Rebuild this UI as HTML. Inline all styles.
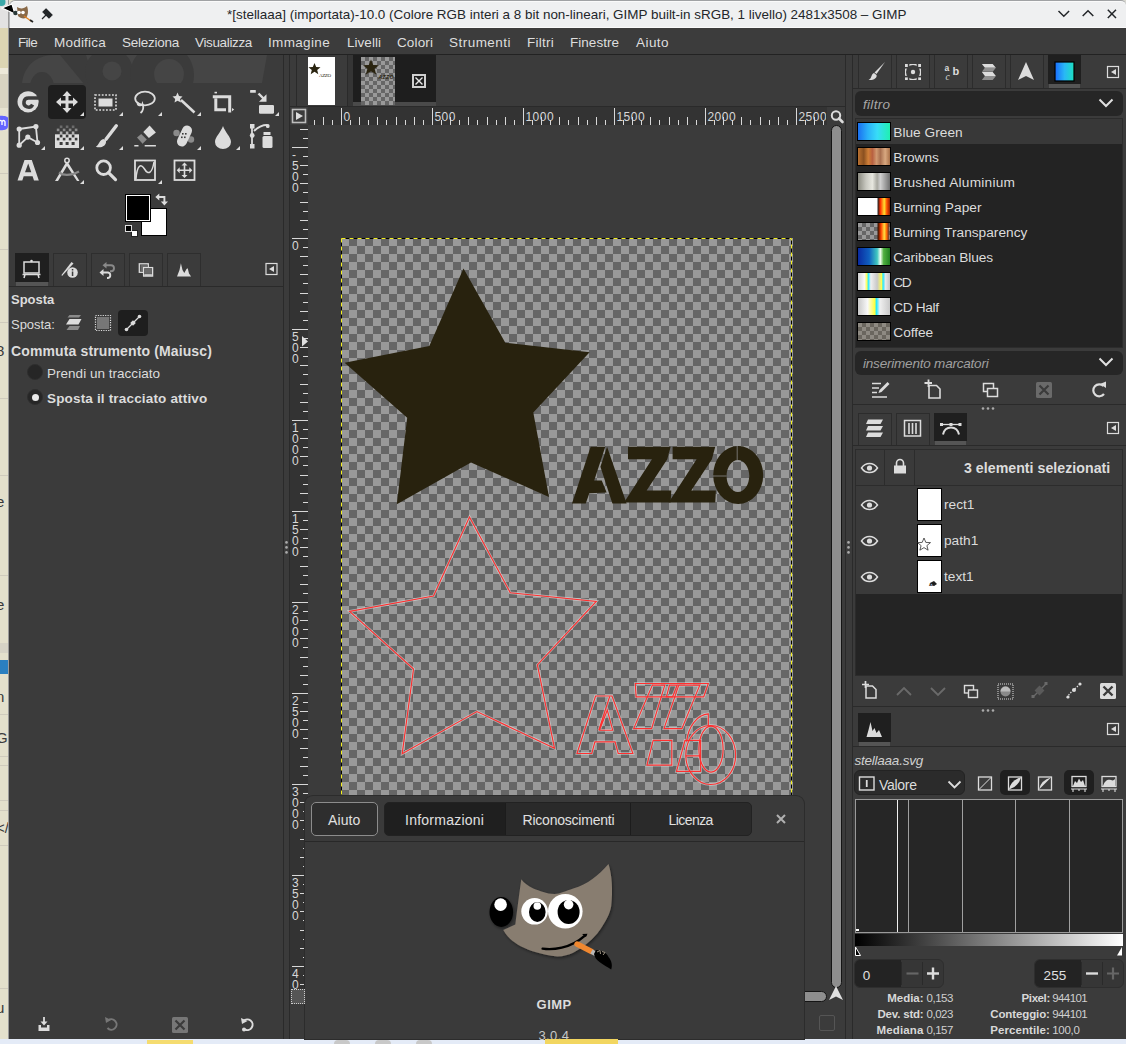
<!DOCTYPE html>
<html><head><meta charset="utf-8">
<style>
*{box-sizing:border-box;margin:0;padding:0}
html,body{width:1126px;height:1044px;overflow:hidden;background:#e4e1cf;font-family:"Liberation Sans",sans-serif;position:relative}
.a{position:absolute}
.t{position:absolute;white-space:pre;line-height:1}
svg{position:absolute;overflow:visible}
</style></head><body>
<div class="a" style="left:0px;top:0px;width:9px;height:1044px;background:#e3e0cc;"></div>
<div class="a" style="left:0px;top:1039px;width:1126px;height:5px;background:#e4ebf7;"></div>
<div class="a" style="left:147px;top:1040px;width:46px;height:4px;background:#f5dc70;"></div>
<div class="a" style="left:334px;top:1040px;width:16px;height:4px;background:#c8c8c8;border-radius:8px 8px 0 0"></div>
<div class="a" style="left:375px;top:1040px;width:16px;height:4px;background:#c8c8c8;border-radius:8px 8px 0 0"></div>
<div class="a" style="left:416px;top:1040px;width:16px;height:4px;background:#c8c8c8;border-radius:8px 8px 0 0"></div>
<div class="a" style="left:9px;top:28px;width:1117px;height:1011px;background:#3b3b3b;"></div>
<div class="a" style="left:0px;top:0px;width:9px;height:28px;background:#e2e2e2;"></div>
<div class="a" style="left:1116px;top:0px;width:10px;height:10px;background:#d8d8d0;"></div>
<div class="a" style="left:9px;top:0px;width:1117px;height:28px;background:#eff0f1;border-top-left-radius:6px;border-top-right-radius:5px;border-top:1px solid #a0a2a4;border-left:1px solid #b4b6b8;box-shadow:inset 0 1px 0 #fafafa,inset 0 -1px 0 #fafafa"></div>
<div class="t" style="left:227px;top:8px;font-size:13.45px;color:#232629;font-weight:400;">*[stellaaa] (importata)-10.0 (Colore RGB interi a 8 bit non-lineari, GIMP built-in sRGB, 1 livello) 2481x3508 – GIMP</div>
<svg style="left:0px;top:0px;" width="1126" height="30" viewBox="0 0 1126 30"><path d="M1058.5 11 L1063.8 16.3 L1069.1 11 M1082.7 16 L1088 10.7 L1093.3 16 M1107.8 9.8 L1116 18 M1116 9.8 L1107.8 18" fill="none" stroke="#232629" stroke-width="1.5"/></svg>
<div class="a" style="left:9px;top:28px;width:1117px;height:26px;background:#3c3c3c;"></div>
<div class="a" style="left:9px;top:54px;width:1117px;height:1px;background:#222222;"></div>
<div class="t" style="left:18px;top:36px;font-size:13.5px;color:#dedede;font-weight:400;letter-spacing:-0.688px;">File</div>
<div class="t" style="left:54px;top:36px;font-size:13.5px;color:#dedede;font-weight:400;letter-spacing:0.216px;">Modifica</div>
<div class="t" style="left:122px;top:36px;font-size:13.5px;color:#dedede;font-weight:400;letter-spacing:-0.255px;">Seleziona</div>
<div class="t" style="left:195px;top:36px;font-size:13.5px;color:#dedede;font-weight:400;letter-spacing:-0.353px;">Visualizza</div>
<div class="t" style="left:268px;top:36px;font-size:13.5px;color:#dedede;font-weight:400;letter-spacing:0.341px;">Immagine</div>
<div class="t" style="left:347px;top:36px;font-size:13.5px;color:#dedede;font-weight:400;letter-spacing:0.034px;">Livelli</div>
<div class="t" style="left:397px;top:36px;font-size:13.5px;color:#dedede;font-weight:400;letter-spacing:0.123px;">Colori</div>
<div class="t" style="left:449px;top:36px;font-size:13.5px;color:#dedede;font-weight:400;letter-spacing:0.470px;">Strumenti</div>
<div class="t" style="left:527px;top:36px;font-size:13.5px;color:#dedede;font-weight:400;letter-spacing:0.252px;">Filtri</div>
<div class="t" style="left:570px;top:36px;font-size:13.5px;color:#dedede;font-weight:400;letter-spacing:0.029px;">Finestre</div>
<div class="t" style="left:636px;top:36px;font-size:13.5px;color:#dedede;font-weight:400;letter-spacing:0.446px;">Aiuto</div>
<svg style="left:9px;top:55px;overflow:hidden" width="274" height="28" viewBox="0 0 274 28"><g transform="translate(-9,-55)">
<path d="M22 83 C24 66 36 56 52 55 L267 55 L262 83 Z" fill="#454545"/>
<ellipse cx="42" cy="87" rx="12" ry="15" fill="#3b3b3b"/>
<path d="M60 55 L84 84 L95 84 L86 55 Z" fill="#3b3b3b"/>
<circle cx="109" cy="72" r="24" fill="#3b3b3b"/>
<circle cx="112" cy="71" r="9.5" fill="#454545"/>
<circle cx="162" cy="75" r="32" fill="#3b3b3b"/>
<circle cx="169" cy="74" r="15" fill="#454545"/>
</g></svg>
<div class="a" style="left:48px;top:85px;width:38px;height:34px;background:#1e1e1e;border-radius:4px"></div>
<svg style="left:0px;top:0px;" width="290" height="200" viewBox="0 0 290 200">
<!-- G -->
<circle cx="28.1" cy="101.85" r="10.6" fill="#dcdcdc"/><path d="M40 97.9 L28.5 97.9 A4.6 4.6 0 1 0 32.6 104.6" fill="none" stroke="#3b3b3b" stroke-width="3.5"/>
<!-- move -->
<path d="M67 91 L71.5 96 L68.5 96 L68.5 100.5 L73 100.5 L73 97.5 L78 102 L73 106.5 L73 103.5 L68.5 103.5 L68.5 108 L71.5 108 L67 113 L62.5 108 L65.5 108 L65.5 103.5 L61 103.5 L61 106.5 L56 102 L61 97.5 L61 100.5 L65.5 100.5 L65.5 96 L62.5 96 Z" fill="#dcdcdc"/>
<!-- rect select -->
<rect x="95" y="95" width="21" height="15" fill="none" stroke="#dcdcdc" stroke-width="1.6" stroke-dasharray="1.8 1.6"/>
<rect x="98.5" y="98.5" width="14" height="8" fill="#dcdcdc"/>
<!-- lasso -->
<ellipse cx="145" cy="98.5" rx="9.8" ry="6.8" fill="none" stroke="#dcdcdc" stroke-width="1.8"/>
<path d="M138 102 C136 106 142 106 142.5 104 C144 108 143 111 140.5 113" fill="none" stroke="#dcdcdc" stroke-width="1.8"/>
<!-- fuzzy -->
<path d="M177.5 92.5 L179 96 L182.5 96.5 L180 99 L181 102.5 L177.5 100.8 L174.5 102.5 L175.2 99 L172.5 96.5 L176 96 Z" fill="#dcdcdc"/>
<path d="M181 100 L194.5 112.5" stroke="#dcdcdc" stroke-width="2.6"/>
<!-- crop -->
<path d="M212.8 96.7 L229.7 96.7 L229.7 112.5 M215.8 98.5 L215.8 109.7 L226 109.7" fill="none" stroke="#dcdcdc" stroke-width="3"/><rect x="214.5" y="91.8" width="2.5" height="1.6" fill="#dcdcdc"/><path d="M232 108 L234.2 109.6 L232 111.2 Z" fill="#dcdcdc"/>
<!-- unified transform -->
<rect x="259" y="104.9" width="15" height="8.9" rx="1.2" fill="#dcdcdc"/>
<rect x="250.1" y="90" width="5.7" height="2.8" rx="0.5" fill="#dcdcdc"/>
<path d="M258.5 93.5 L264 99" stroke="#dcdcdc" stroke-width="2.4"/>
<path d="M259 101.8 L266.5 101.8 L266.5 94.3 Z" fill="#dcdcdc"/>
<!-- cage -->
<path d="M19.2 129 L35.9 126.6 L37.5 142.5 L27.8 137.1 L19.2 145.2 Z" fill="none" stroke="#dcdcdc" stroke-width="1.8"/>
<circle cx="19.2" cy="129" r="2.6" fill="#dcdcdc"/><circle cx="35.9" cy="126.6" r="2.6" fill="#dcdcdc"/><circle cx="37.5" cy="142.5" r="2.6" fill="#dcdcdc"/><circle cx="27.8" cy="137.1" r="2.6" fill="#dcdcdc"/><circle cx="19.2" cy="145.2" r="2.6" fill="#dcdcdc"/>
<!-- gradient -->
<rect x="55" y="134.3" width="24" height="13.7" fill="#dcdcdc"/>
<g fill="#3b3b3b"><rect x="59.8" y="134.8" width="2.6" height="2.6"/><rect x="65.8" y="134.8" width="2.6" height="2.6"/><rect x="71.8" y="134.8" width="2.6" height="2.6"/>
<rect x="56.8" y="137.8" width="2.6" height="2.6"/><rect x="62.8" y="137.8" width="2.6" height="2.6"/><rect x="68.8" y="137.8" width="2.6" height="2.6"/><rect x="74.8" y="137.8" width="2.6" height="2.6"/>
<rect x="59.6" y="142" width="3" height="3"/><rect x="65.6" y="142" width="3" height="3"/><rect x="71.6" y="142" width="3" height="3"/></g>
<g fill="#dcdcdc"><rect x="59.8" y="131.5" width="2.6" height="2.6" opacity="0.75"/><rect x="65.8" y="131.5" width="2.6" height="2.6" opacity="0.75"/><rect x="71.8" y="131.5" width="2.6" height="2.6" opacity="0.75"/>
<rect x="56.8" y="128.6" width="2.6" height="2.6" opacity="0.5"/><rect x="62.8" y="128.6" width="2.6" height="2.6" opacity="0.5"/><rect x="68.8" y="128.6" width="2.6" height="2.6" opacity="0.5"/><rect x="74.8" y="128.6" width="2.6" height="2.6" opacity="0.5"/>
<rect x="59.8" y="125.5" width="2.6" height="2.6" opacity="0.3"/><rect x="65.8" y="125.5" width="2.6" height="2.6" opacity="0.3"/><rect x="71.8" y="125.5" width="2.6" height="2.6" opacity="0.3"/></g>
<!-- brush -->
<path d="M116.3 125.8 L106 139.3" stroke="#dcdcdc" stroke-width="3.4" stroke-linecap="round"/><path d="M116.3 125.8 L106 139.3" stroke="#dcdcdc" stroke-width="0"/>
<path d="M103.5 139 C99.5 139.5 99 145 95.8 146.8 C101 148.5 106.5 146 106 141 Z" fill="#dcdcdc"/>
<!-- eraser -->
<path d="M149.6 125.6 L155.9 132.6 L148.9 138.1 L143.3 131.9 Z" fill="#dcdcdc"/>
<path d="M141.2 134 L146.8 139.5 L142.6 143.7 L137 137.4 Z" fill="#8a8a8a"/>
<path d="M134.3 145.8 L138.5 145.8 M144.7 145.8 L155.9 145.8" stroke="#dcdcdc" stroke-width="1.5"/>
<!-- heal -->
<circle cx="176.5" cy="133" r="3.2" fill="#8a8a8a"/><circle cx="191" cy="139.5" r="3.2" fill="#8a8a8a"/>
<rect x="179.5" y="125" width="10" height="22" rx="5" fill="#dcdcdc" transform="rotate(25 184.5 136)"/>
<g fill="#3b3b3b"><rect x="182" y="133" width="1.6" height="1.6"/><rect x="185" y="133" width="1.6" height="1.6"/><rect x="181" y="136.5" width="1.6" height="1.6"/><rect x="184" y="136.5" width="1.6" height="1.6"/></g>
<!-- drop -->
<path d="M223 126 C225 132 231 137 231 142 A8 7 0 0 1 215 142 C215 137 221 132 223 126 Z" fill="#dcdcdc"/>
<!-- path + bottle -->
<path d="M252 125 L252 147" stroke="#dcdcdc" stroke-width="1.8"/>
<rect x="250" y="124" width="4.5" height="4.5" fill="#dcdcdc"/><rect x="250" y="144" width="4.5" height="4.5" fill="#dcdcdc"/><circle cx="252.2" cy="135.5" r="2.4" fill="#dcdcdc"/>
<path d="M254 131 C258 127 262 125 267 125" fill="none" stroke="#dcdcdc" stroke-width="1.8"/>
<rect x="266" y="124" width="3.5" height="4" rx="1.5" fill="#dcdcdc"/>
<rect x="263.5" y="132" width="7" height="3" fill="#dcdcdc"/>
<rect x="262.5" y="136" width="10" height="12" rx="1.5" fill="#dcdcdc"/>
<!-- text A -->
<path d="M24.5 160 L31.8 160 L38.8 180.6 L34 180.6 L32.6 176.2 L23.7 176.2 L22.3 180.6 L17.5 180.6 Z M25 172.3 L31.3 172.3 L28.2 163.5 Z" fill="#dcdcdc"/>
<!-- compass -->
<circle cx="67" cy="160.5" r="2.2" fill="none" stroke="#dcdcdc" stroke-width="1.5"/>
<path d="M66 162.5 L55 181 L58 181 L67 166 L77 181 L79.5 181 L68 162.5 Z" fill="#dcdcdc"/>
<path d="M59 172.5 C64 176 71 175.5 79 171.5" fill="none" stroke="#8a8a8a" stroke-width="2.4"/>
<!-- zoom -->
<circle cx="103.6" cy="167.7" r="6.8" fill="none" stroke="#dcdcdc" stroke-width="2.8"/>
<path d="M108.5 172.6 L115.5 179.6" stroke="#dcdcdc" stroke-width="3.2" stroke-linecap="round"/>
<!-- curves -->
<rect x="135" y="160.5" width="20" height="19.5" fill="none" stroke="#dcdcdc" stroke-width="1.8"/>
<path d="M136 179 C137 165 141 163 144.5 169 C148 175 152 174 154 162" fill="none" stroke="#dcdcdc" stroke-width="1.5"/>
<!-- align -->
<rect x="174.5" y="160.5" width="20" height="19.5" fill="none" stroke="#dcdcdc" stroke-width="1.8"/>
<path d="M184.5 162.5 L187.5 165.5 L185.3 165.5 L185.3 169.5 L189.3 169.5 L189.3 167.3 L192.3 170.3 L189.3 173.3 L189.3 171.1 L185.3 171.1 L185.3 175.1 L187.5 175.1 L184.5 178.1 L181.5 175.1 L183.7 175.1 L183.7 171.1 L179.7 171.1 L179.7 173.3 L176.7 170.3 L179.7 167.3 L179.7 169.5 L183.7 169.5 L183.7 165.5 L181.5 165.5 Z" fill="#dcdcdc"/>
<path d="M84 112 L84 116 L80 116 Z" fill="#dcdcdc"/><path d="M123 112 L123 116 L119 116 Z" fill="#dcdcdc"/><path d="M162 112 L162 116 L158 116 Z" fill="#dcdcdc"/><path d="M201 112 L201 116 L197 116 Z" fill="#dcdcdc"/><path d="M279 112 L279 116 L275 116 Z" fill="#dcdcdc"/><path d="M45 146 L45 150 L41 150 Z" fill="#dcdcdc"/><path d="M84 146 L84 150 L80 150 Z" fill="#dcdcdc"/><path d="M123 146 L123 150 L119 150 Z" fill="#dcdcdc"/><path d="M201 146 L201 150 L197 150 Z" fill="#dcdcdc"/><path d="M240 146 L240 150 L236 150 Z" fill="#dcdcdc"/><path d="M84 180 L84 184 L80 184 Z" fill="#dcdcdc"/><path d="M162 180 L162 184 L158 184 Z" fill="#dcdcdc"/></svg>
<div class="a" style="left:141px;top:208px;width:26px;height:28px;background:#ffffff;border:1px solid #000"></div>
<div class="a" style="left:125px;top:194px;width:26px;height:28px;background:#000;border:1px solid #000;box-shadow:inset 0 0 0 1px #fff"></div>
<div class="a" style="left:126px;top:195px;width:24px;height:26px;background:#000;border:1px solid #fff"></div>
<svg style="left:0px;top:0px;" width="1126" height="1044" viewBox="0 0 1126 1044"><path d="M158.5 197 L164.4 197 L164.4 202" fill="none" stroke="#dcdcdc" stroke-width="1.9"/><path d="M155.3 197 L159.3 193.6 L159.3 200.4 Z M160.8 201.5 L168 201.5 L164.4 205.6 Z" fill="#dcdcdc"/></svg>
<div class="a" style="left:130.5px;top:229.8px;width:7px;height:7px;background:#fff;border:1px solid #222"></div>
<div class="a" style="left:125px;top:224.5px;width:7px;height:7px;background:#000;border:1px solid #ddd"></div>
<div class="a" style="left:9px;top:286px;width:274px;height:1px;background:#2a2a2a;"></div>
<div class="a" style="left:15px;top:253px;width:34px;height:29px;background:#1f1f1f;"></div>
<div class="a" style="left:16px;top:282px;width:32px;height:4px;background:#555555;"></div>
<div class="a" style="left:53px;top:253px;width:34px;height:33px;background:#3b3b3b;border:1px solid #2e2e2e;border-bottom:none"></div>
<div class="a" style="left:91px;top:253px;width:34px;height:33px;background:#3b3b3b;border:1px solid #2e2e2e;border-bottom:none"></div>
<div class="a" style="left:129px;top:253px;width:34px;height:33px;background:#3b3b3b;border:1px solid #2e2e2e;border-bottom:none"></div>
<div class="a" style="left:167px;top:253px;width:34px;height:33px;background:#3b3b3b;border:1px solid #2e2e2e;border-bottom:none"></div>
<svg style="left:0px;top:0px;" width="290" height="340" viewBox="0 0 290 340">
<!-- tool options icon (easel) -->
<rect x="24" y="262" width="15" height="11" fill="none" stroke="#dcdcdc" stroke-width="1.5"/>
<path d="M31.5 260 L31.5 262 M22.5 274.5 L40.5 274.5 M25 274.5 L24 278 M38 274.5 L39 278" stroke="#dcdcdc" stroke-width="1.5"/>
<circle cx="31.5" cy="261" r="1.2" fill="#dcdcdc"/>
<!-- device status (pen + i) -->
<path d="M71.5 262 L61.5 275 L62 276 L73.5 263.5 Z" fill="#dcdcdc"/>
<circle cx="72.5" cy="272.5" r="5.3" fill="#dcdcdc"/>
<rect x="71.8" y="271.5" width="1.5" height="4.5" fill="#3b3b3b"/><rect x="71.8" y="269" width="1.5" height="1.5" fill="#3b3b3b"/>
<!-- undo history -->
<path d="M105.5 265.3 L111 265.3 A3 3 0 0 1 111 271.3 L110 271.3" fill="none" stroke="#8a8a8a" stroke-width="1.9"/>
<path d="M106.5 262 L102.5 265.3 L106.5 268.6 Z" fill="#8a8a8a"/>
<path d="M102 272.5 L108 272.5 A2.8 2.8 0 0 1 108 278 L107 278" fill="none" stroke="#dcdcdc" stroke-width="1.9"/>
<path d="M103.5 269 L99.5 272.5 L103.5 276 Z" fill="#dcdcdc"/>
<!-- images -->
<rect x="139.3" y="263.8" width="9" height="8.5" fill="none" stroke="#dcdcdc" stroke-width="1.3"/>
<rect x="140.5" y="265" width="6.5" height="6" fill="#6a6a6a"/>
<rect x="143.6" y="267.6" width="9" height="8.5" fill="#3b3b3b" stroke="#dcdcdc" stroke-width="1.3"/>
<rect x="144.3" y="268.3" width="7.6" height="5.6" fill="#6a6a6a"/>
<rect x="144.3" y="274.2" width="7.6" height="1.6" fill="#dcdcdc"/>
<!-- histogram -->
<path d="M177 276.5 L179.5 270 L180.9 263.3 L182.5 270 L184.3 273 L186.5 269 L187.7 268.2 L189 273.5 L191.1 276.5 Z" fill="#dcdcdc"/>
<!-- tab menu -->
<rect x="266" y="263.5" width="11" height="11" fill="none" stroke="#dcdcdc" stroke-width="1.2"/>
<path d="M274 266 L274 272 L269 269 Z" fill="#dcdcdc"/>
<!-- Sposta icons -->
<path d="M69.5 315 L81 315 L79 317.5 L67.5 317.5 Z" fill="#8a8a8a"/>
<path d="M69.5 319 L81.5 319 L78.5 324.5 L66 324.5 Z" fill="#dcdcdc"/>
<path d="M69.5 326 L80 326 L78 330 L66.5 330 Z" fill="#8a8a8a"/>
<rect x="95.5" y="315.5" width="15" height="15" fill="none" stroke="#dcdcdc" stroke-width="1.2" stroke-dasharray="1.2 1.2"/>
<rect x="97" y="317" width="12" height="12" fill="#777"/>
</svg>
<div class="a" style="left:118px;top:310px;width:30px;height:26px;background:#1e1e1e;border-radius:4px"></div>
<svg style="left:118px;top:310px;" width="30" height="26" viewBox="0 0 30 26"><path d="M8.5 19.5 L21.5 6.5" stroke="#dcdcdc" stroke-width="1.3"/><circle cx="8.5" cy="19.5" r="1.8" fill="#dcdcdc"/><circle cx="21.5" cy="6.5" r="1.8" fill="#dcdcdc"/><rect x="13" y="11" width="4" height="4" fill="#dcdcdc" transform="rotate(45 15 13)"/></svg>
<div class="t" style="left:11px;top:293px;font-size:13px;color:#dcdcdc;font-weight:700;letter-spacing:-0.024px;">Sposta</div>
<div class="t" style="left:11px;top:318px;font-size:13px;color:#dcdcdc;font-weight:400;letter-spacing:-0.041px;">Sposta:</div>
<div class="t" style="left:11px;top:344px;font-size:14px;color:#dcdcdc;font-weight:700;letter-spacing:0.132px;">Commuta strumento (Maiusc)</div>
<div class="a" style="left:27px;top:364px;width:16px;height:16px;background:#262626;border-radius:50%;border:1px solid #2e2e2e"></div>
<div class="t" style="left:47px;top:367px;font-size:13.5px;color:#dcdcdc;font-weight:400;letter-spacing:0.023px;">Prendi un tracciato</div>
<div class="a" style="left:27px;top:389px;width:16px;height:16px;background:#262626;border-radius:50%;border:1px solid #2e2e2e"></div>
<div class="a" style="left:31.5px;top:393.5px;width:7px;height:7px;background:#e8e8e8;border-radius:50%"></div>
<div class="t" style="left:47px;top:392px;font-size:13.5px;color:#dcdcdc;font-weight:700;letter-spacing:0.168px;">Sposta il tracciato attivo</div>
<svg style="left:0px;top:0px;" width="290" height="1040" viewBox="0 0 290 1040">
<path d="M44 1017 L44 1024" stroke="#dcdcdc" stroke-width="1.8"/><path d="M40.5 1021.5 L44 1025.5 L47.5 1021.5 Z" fill="#dcdcdc"/>
<path d="M38.5 1025 L38.5 1031 L49.5 1031 L49.5 1025 L47 1025 L47 1027.5 L41 1027.5 L41 1025 Z" fill="#dcdcdc"/>
<path d="M108 1020.5 A5.2 5.2 0 1 1 107.5 1028" fill="none" stroke="#777" stroke-width="2"/><path d="M105 1017 L106 1023 L111 1020 Z" fill="#777"/>
<rect x="172" y="1017" width="16" height="16" rx="1.5" fill="#777"/><path d="M175.5 1020.5 L184.5 1029.5 M184.5 1020.5 L175.5 1029.5" stroke="#3b3b3b" stroke-width="2.2"/>
<path d="M243.5 1021 A5.3 5.3 0 1 1 245 1029.5" fill="none" stroke="#dcdcdc" stroke-width="2"/><path d="M241 1018 L242 1024 L247.5 1021 Z" fill="#dcdcdc"/><circle cx="244" cy="1029.5" r="2" fill="#dcdcdc"/>
</svg>
<div class="a" style="left:283px;top:55px;width:1px;height:984px;background:#2a2a2a;"></div>
<div class="a" style="left:289px;top:55px;width:1px;height:984px;background:#2a2a2a;"></div>
<div class="a" style="left:845px;top:55px;width:1px;height:984px;background:#2a2a2a;"></div>
<div class="a" style="left:296px;top:55px;width:1px;height:51px;background:#2a2a2a;"></div>
<div class="a" style="left:347px;top:55px;width:1px;height:51px;background:#2a2a2a;"></div>
<div class="a" style="left:348px;top:55px;width:5px;height:51px;background:#353535;"></div>
<div class="a" style="left:353px;top:55px;width:83px;height:47px;background:#1e1e1e;"></div>
<div class="a" style="left:353px;top:102px;width:83px;height:4px;background:#4a4a4a;"></div>
<div class="a" style="left:308px;top:57px;width:27px;height:48px;background:#ffffff;"></div>
<div class="a" style="left:361px;top:57px;width:34px;height:48px;background:#999;background-image:repeating-conic-gradient(#666 0 25%,#999 0 50%);background-size:8px 8px"></div>
<svg style="left:308px;top:57px;overflow:hidden" width="27" height="48" viewBox="0 0 27 48"><path d="M6.5 6 L8.2 10 L12.5 10.3 L9.2 13 L10.3 17.3 L6.5 14.8 L2.7 17.3 L3.8 13 L0.5 10.3 L4.8 10 Z" fill="#2a2410"/><text x="11" y="19.5" font-size="5" font-family="Liberation Serif" fill="#2a2410" textLength="12">AZZO</text></svg>
<svg style="left:361px;top:57px;overflow:hidden" width="34" height="48" viewBox="0 0 34 48"><path d="M10 2.5 L12.2 8 L18 8.3 L13.6 11.8 L15.2 17.5 L10 14.3 L4.8 17.5 L6.4 11.8 L2 8.3 L7.8 8 Z" fill="#2a2410"/><text x="17.5" y="21.5" font-size="5.2" font-weight="bold" font-style="italic" font-family="Liberation Sans" fill="#2a2410" textLength="15">AZZO</text></svg>
<div class="a" style="left:412px;top:74px;width:14px;height:14px;background:#1e1e1e;border:2px solid #d0d0d0"></div>
<svg style="left:412px;top:74px;" width="14" height="14" viewBox="0 0 14 14"><path d="M3.5 3.5 L10.5 10.5 M10.5 3.5 L3.5 10.5" stroke="#e8e8e8" stroke-width="1.4"/></svg>
<div class="a" style="left:290px;top:106px;width:555px;height:1px;background:#2a2a2a;"></div>
<div class="a" style="left:308px;top:107px;width:519px;height:18px;background:#333333;"></div>
<div class="a" style="left:290px;top:125px;width:18px;height:864px;background:#333333;"></div>
<svg style="left:291px;top:108px;" width="16" height="16" viewBox="0 0 16 16"><rect x="1.5" y="1.5" width="13" height="13" fill="#3b3b3b" stroke="#bdbdbd" stroke-width="1.6"/><path d="M5 4 L12 8 L5 12 Z" fill="#dcdcdc"/></svg>
<svg style="left:0px;top:0px;pointer-events:none" width="1126" height="1044" viewBox="0 0 1126 1044"><rect x="314" y="120" width="1" height="5" fill="#d8d8d8"/><rect x="323" y="117" width="1" height="8" fill="#d8d8d8"/><rect x="332" y="120" width="1" height="5" fill="#d8d8d8"/><rect x="341" y="108" width="1" height="17" fill="#d8d8d8"/><rect x="350" y="120" width="1" height="5" fill="#d8d8d8"/><rect x="359" y="117" width="1" height="8" fill="#d8d8d8"/><rect x="368" y="120" width="1" height="5" fill="#d8d8d8"/><rect x="377" y="117" width="1" height="8" fill="#d8d8d8"/><rect x="386" y="120" width="1" height="5" fill="#d8d8d8"/><rect x="396" y="117" width="1" height="8" fill="#d8d8d8"/><rect x="405" y="120" width="1" height="5" fill="#d8d8d8"/><rect x="414" y="117" width="1" height="8" fill="#d8d8d8"/><rect x="423" y="120" width="1" height="5" fill="#d8d8d8"/><rect x="432" y="108" width="1" height="17" fill="#d8d8d8"/><rect x="441" y="120" width="1" height="5" fill="#d8d8d8"/><rect x="450" y="117" width="1" height="8" fill="#d8d8d8"/><rect x="459" y="120" width="1" height="5" fill="#d8d8d8"/><rect x="468" y="117" width="1" height="8" fill="#d8d8d8"/><rect x="477" y="120" width="1" height="5" fill="#d8d8d8"/><rect x="487" y="117" width="1" height="8" fill="#d8d8d8"/><rect x="496" y="120" width="1" height="5" fill="#d8d8d8"/><rect x="505" y="117" width="1" height="8" fill="#d8d8d8"/><rect x="514" y="120" width="1" height="5" fill="#d8d8d8"/><rect x="523" y="108" width="1" height="17" fill="#d8d8d8"/><rect x="532" y="120" width="1" height="5" fill="#d8d8d8"/><rect x="541" y="117" width="1" height="8" fill="#d8d8d8"/><rect x="550" y="120" width="1" height="5" fill="#d8d8d8"/><rect x="559" y="117" width="1" height="8" fill="#d8d8d8"/><rect x="568" y="120" width="1" height="5" fill="#d8d8d8"/><rect x="578" y="117" width="1" height="8" fill="#d8d8d8"/><rect x="587" y="120" width="1" height="5" fill="#d8d8d8"/><rect x="596" y="117" width="1" height="8" fill="#d8d8d8"/><rect x="605" y="120" width="1" height="5" fill="#d8d8d8"/><rect x="614" y="108" width="1" height="17" fill="#d8d8d8"/><rect x="623" y="120" width="1" height="5" fill="#d8d8d8"/><rect x="632" y="117" width="1" height="8" fill="#d8d8d8"/><rect x="641" y="120" width="1" height="5" fill="#d8d8d8"/><rect x="650" y="117" width="1" height="8" fill="#d8d8d8"/><rect x="659" y="120" width="1" height="5" fill="#d8d8d8"/><rect x="669" y="117" width="1" height="8" fill="#d8d8d8"/><rect x="678" y="120" width="1" height="5" fill="#d8d8d8"/><rect x="687" y="117" width="1" height="8" fill="#d8d8d8"/><rect x="696" y="120" width="1" height="5" fill="#d8d8d8"/><rect x="705" y="108" width="1" height="17" fill="#d8d8d8"/><rect x="714" y="120" width="1" height="5" fill="#d8d8d8"/><rect x="723" y="117" width="1" height="8" fill="#d8d8d8"/><rect x="732" y="120" width="1" height="5" fill="#d8d8d8"/><rect x="741" y="117" width="1" height="8" fill="#d8d8d8"/><rect x="750" y="120" width="1" height="5" fill="#d8d8d8"/><rect x="760" y="117" width="1" height="8" fill="#d8d8d8"/><rect x="769" y="120" width="1" height="5" fill="#d8d8d8"/><rect x="778" y="117" width="1" height="8" fill="#d8d8d8"/><rect x="787" y="120" width="1" height="5" fill="#d8d8d8"/><rect x="796" y="108" width="1" height="17" fill="#d8d8d8"/><rect x="805" y="120" width="1" height="5" fill="#d8d8d8"/><rect x="814" y="117" width="1" height="8" fill="#d8d8d8"/><rect x="823" y="120" width="1" height="5" fill="#d8d8d8"/></svg>
<div class="t" style="left:343.4px;top:111px;font-size:12px;color:#d8d8d8;letter-spacing:0.5px;width:88px;overflow:hidden">0</div>
<div class="t" style="left:434.4px;top:111px;font-size:12px;color:#d8d8d8;letter-spacing:0.5px;width:88px;overflow:hidden">500</div>
<div class="t" style="left:525.4px;top:111px;font-size:12px;color:#d8d8d8;letter-spacing:0.5px;width:88px;overflow:hidden">1000</div>
<div class="t" style="left:616.4px;top:111px;font-size:12px;color:#d8d8d8;letter-spacing:0.5px;width:88px;overflow:hidden">1500</div>
<div class="t" style="left:707.4px;top:111px;font-size:12px;color:#d8d8d8;letter-spacing:0.5px;width:88px;overflow:hidden">2000</div>
<div class="t" style="left:798.4px;top:111px;font-size:12px;color:#d8d8d8;letter-spacing:0.5px;width:28px;overflow:hidden">2500</div>
<svg style="left:0px;top:0px;" width="1126" height="1044" viewBox="0 0 1126 1044"><rect x="300" y="129" width="8" height="1" fill="#d8d8d8"/><rect x="303" y="138" width="5" height="1" fill="#d8d8d8"/><rect x="292" y="147" width="16" height="1" fill="#d8d8d8"/><rect x="303" y="156" width="5" height="1" fill="#d8d8d8"/><rect x="300" y="165" width="8" height="1" fill="#d8d8d8"/><rect x="303" y="174" width="5" height="1" fill="#d8d8d8"/><rect x="300" y="183" width="8" height="1" fill="#d8d8d8"/><rect x="303" y="192" width="5" height="1" fill="#d8d8d8"/><rect x="300" y="202" width="8" height="1" fill="#d8d8d8"/><rect x="303" y="211" width="5" height="1" fill="#d8d8d8"/><rect x="300" y="220" width="8" height="1" fill="#d8d8d8"/><rect x="303" y="229" width="5" height="1" fill="#d8d8d8"/><rect x="292" y="238" width="16" height="1" fill="#d8d8d8"/><rect x="303" y="247" width="5" height="1" fill="#d8d8d8"/><rect x="300" y="256" width="8" height="1" fill="#d8d8d8"/><rect x="303" y="265" width="5" height="1" fill="#d8d8d8"/><rect x="300" y="274" width="8" height="1" fill="#d8d8d8"/><rect x="303" y="283" width="5" height="1" fill="#d8d8d8"/><rect x="300" y="293" width="8" height="1" fill="#d8d8d8"/><rect x="303" y="302" width="5" height="1" fill="#d8d8d8"/><rect x="300" y="311" width="8" height="1" fill="#d8d8d8"/><rect x="303" y="320" width="5" height="1" fill="#d8d8d8"/><rect x="292" y="329" width="16" height="1" fill="#d8d8d8"/><rect x="303" y="338" width="5" height="1" fill="#d8d8d8"/><rect x="300" y="347" width="8" height="1" fill="#d8d8d8"/><rect x="303" y="356" width="5" height="1" fill="#d8d8d8"/><rect x="300" y="365" width="8" height="1" fill="#d8d8d8"/><rect x="303" y="374" width="5" height="1" fill="#d8d8d8"/><rect x="300" y="384" width="8" height="1" fill="#d8d8d8"/><rect x="303" y="393" width="5" height="1" fill="#d8d8d8"/><rect x="300" y="402" width="8" height="1" fill="#d8d8d8"/><rect x="303" y="411" width="5" height="1" fill="#d8d8d8"/><rect x="292" y="420" width="16" height="1" fill="#d8d8d8"/><rect x="303" y="429" width="5" height="1" fill="#d8d8d8"/><rect x="300" y="438" width="8" height="1" fill="#d8d8d8"/><rect x="303" y="447" width="5" height="1" fill="#d8d8d8"/><rect x="300" y="456" width="8" height="1" fill="#d8d8d8"/><rect x="303" y="465" width="5" height="1" fill="#d8d8d8"/><rect x="300" y="475" width="8" height="1" fill="#d8d8d8"/><rect x="303" y="484" width="5" height="1" fill="#d8d8d8"/><rect x="300" y="493" width="8" height="1" fill="#d8d8d8"/><rect x="303" y="502" width="5" height="1" fill="#d8d8d8"/><rect x="292" y="511" width="16" height="1" fill="#d8d8d8"/><rect x="303" y="520" width="5" height="1" fill="#d8d8d8"/><rect x="300" y="529" width="8" height="1" fill="#d8d8d8"/><rect x="303" y="538" width="5" height="1" fill="#d8d8d8"/><rect x="300" y="547" width="8" height="1" fill="#d8d8d8"/><rect x="303" y="556" width="5" height="1" fill="#d8d8d8"/><rect x="300" y="566" width="8" height="1" fill="#d8d8d8"/><rect x="303" y="575" width="5" height="1" fill="#d8d8d8"/><rect x="300" y="584" width="8" height="1" fill="#d8d8d8"/><rect x="303" y="593" width="5" height="1" fill="#d8d8d8"/><rect x="292" y="602" width="16" height="1" fill="#d8d8d8"/><rect x="303" y="611" width="5" height="1" fill="#d8d8d8"/><rect x="300" y="620" width="8" height="1" fill="#d8d8d8"/><rect x="303" y="629" width="5" height="1" fill="#d8d8d8"/><rect x="300" y="638" width="8" height="1" fill="#d8d8d8"/><rect x="303" y="647" width="5" height="1" fill="#d8d8d8"/><rect x="300" y="657" width="8" height="1" fill="#d8d8d8"/><rect x="303" y="666" width="5" height="1" fill="#d8d8d8"/><rect x="300" y="675" width="8" height="1" fill="#d8d8d8"/><rect x="303" y="684" width="5" height="1" fill="#d8d8d8"/><rect x="292" y="693" width="16" height="1" fill="#d8d8d8"/><rect x="303" y="702" width="5" height="1" fill="#d8d8d8"/><rect x="300" y="711" width="8" height="1" fill="#d8d8d8"/><rect x="303" y="720" width="5" height="1" fill="#d8d8d8"/><rect x="300" y="729" width="8" height="1" fill="#d8d8d8"/><rect x="303" y="738" width="5" height="1" fill="#d8d8d8"/><rect x="300" y="748" width="8" height="1" fill="#d8d8d8"/><rect x="303" y="757" width="5" height="1" fill="#d8d8d8"/><rect x="300" y="766" width="8" height="1" fill="#d8d8d8"/><rect x="303" y="775" width="5" height="1" fill="#d8d8d8"/><rect x="292" y="784" width="16" height="1" fill="#d8d8d8"/><rect x="303" y="793" width="5" height="1" fill="#d8d8d8"/><rect x="300" y="802" width="8" height="1" fill="#d8d8d8"/><rect x="303" y="811" width="5" height="1" fill="#d8d8d8"/><rect x="300" y="820" width="8" height="1" fill="#d8d8d8"/><rect x="303" y="829" width="5" height="1" fill="#d8d8d8"/><rect x="300" y="839" width="8" height="1" fill="#d8d8d8"/><rect x="303" y="848" width="5" height="1" fill="#d8d8d8"/><rect x="300" y="857" width="8" height="1" fill="#d8d8d8"/><rect x="303" y="866" width="5" height="1" fill="#d8d8d8"/><rect x="292" y="875" width="16" height="1" fill="#d8d8d8"/><rect x="303" y="884" width="5" height="1" fill="#d8d8d8"/><rect x="300" y="893" width="8" height="1" fill="#d8d8d8"/><rect x="303" y="902" width="5" height="1" fill="#d8d8d8"/><rect x="300" y="911" width="8" height="1" fill="#d8d8d8"/><rect x="303" y="920" width="5" height="1" fill="#d8d8d8"/><rect x="300" y="930" width="8" height="1" fill="#d8d8d8"/><rect x="303" y="939" width="5" height="1" fill="#d8d8d8"/><rect x="300" y="948" width="8" height="1" fill="#d8d8d8"/><rect x="303" y="957" width="5" height="1" fill="#d8d8d8"/><rect x="292" y="966" width="16" height="1" fill="#d8d8d8"/><rect x="303" y="975" width="5" height="1" fill="#d8d8d8"/><rect x="300" y="984" width="8" height="1" fill="#d8d8d8"/></svg>
<div class="t" style="left:292px;top:149.4px;font-size:12px;color:#d8d8d8">-</div>
<div class="t" style="left:292px;top:160.4px;font-size:12px;color:#d8d8d8">5</div>
<div class="t" style="left:292px;top:171.4px;font-size:12px;color:#d8d8d8">0</div>
<div class="t" style="left:292px;top:182.4px;font-size:12px;color:#d8d8d8">0</div>
<div class="t" style="left:292px;top:240.4px;font-size:12px;color:#d8d8d8">0</div>
<div class="t" style="left:292px;top:331.4px;font-size:12px;color:#d8d8d8">5</div>
<div class="t" style="left:292px;top:342.4px;font-size:12px;color:#d8d8d8">0</div>
<div class="t" style="left:292px;top:353.4px;font-size:12px;color:#d8d8d8">0</div>
<div class="t" style="left:292px;top:422.4px;font-size:12px;color:#d8d8d8">1</div>
<div class="t" style="left:292px;top:433.4px;font-size:12px;color:#d8d8d8">0</div>
<div class="t" style="left:292px;top:444.4px;font-size:12px;color:#d8d8d8">0</div>
<div class="t" style="left:292px;top:455.4px;font-size:12px;color:#d8d8d8">0</div>
<div class="t" style="left:292px;top:513.4px;font-size:12px;color:#d8d8d8">1</div>
<div class="t" style="left:292px;top:524.4px;font-size:12px;color:#d8d8d8">5</div>
<div class="t" style="left:292px;top:535.4px;font-size:12px;color:#d8d8d8">0</div>
<div class="t" style="left:292px;top:546.4px;font-size:12px;color:#d8d8d8">0</div>
<div class="t" style="left:292px;top:604.4px;font-size:12px;color:#d8d8d8">2</div>
<div class="t" style="left:292px;top:615.4px;font-size:12px;color:#d8d8d8">0</div>
<div class="t" style="left:292px;top:626.4px;font-size:12px;color:#d8d8d8">0</div>
<div class="t" style="left:292px;top:637.4px;font-size:12px;color:#d8d8d8">0</div>
<div class="t" style="left:292px;top:695.4px;font-size:12px;color:#d8d8d8">2</div>
<div class="t" style="left:292px;top:706.4px;font-size:12px;color:#d8d8d8">5</div>
<div class="t" style="left:292px;top:717.4px;font-size:12px;color:#d8d8d8">0</div>
<div class="t" style="left:292px;top:728.4px;font-size:12px;color:#d8d8d8">0</div>
<div class="t" style="left:292px;top:786.4px;font-size:12px;color:#d8d8d8">3</div>
<div class="t" style="left:292px;top:797.4px;font-size:12px;color:#d8d8d8">0</div>
<div class="t" style="left:292px;top:808.4px;font-size:12px;color:#d8d8d8">0</div>
<div class="t" style="left:292px;top:819.4px;font-size:12px;color:#d8d8d8">0</div>
<div class="t" style="left:292px;top:877.4px;font-size:12px;color:#d8d8d8">3</div>
<div class="t" style="left:292px;top:888.4px;font-size:12px;color:#d8d8d8">5</div>
<div class="t" style="left:292px;top:899.4px;font-size:12px;color:#d8d8d8">0</div>
<div class="t" style="left:292px;top:910.4px;font-size:12px;color:#d8d8d8">0</div>
<div class="t" style="left:292px;top:968.4px;font-size:12px;color:#d8d8d8">4</div>
<div class="t" style="left:292px;top:979.4px;font-size:12px;color:#d8d8d8">0</div>
<svg style="left:827px;top:107px;" width="18" height="18" viewBox="0 0 18 18"><circle cx="9" cy="8.5" r="4.2" fill="none" stroke="#dcdcdc" stroke-width="2"/><path d="M12 11.5 L15.5 15" stroke="#dcdcdc" stroke-width="2.6" stroke-linecap="round"/></svg>
<div class="a" style="left:341px;top:238px;width:452px;height:639px;background:#999;background-image:repeating-conic-gradient(#666 0 25%,#999 0 50%);background-size:16px 16px"></div>
<svg style="left:0px;top:0px;" width="1126" height="1044" viewBox="0 0 1126 1044"><defs><clipPath id="imgc"><rect x="341" y="238" width="452" height="801"/></clipPath></defs><g clip-path="url(#imgc)"><path d="M463.5 268.4 L505.3 342.7 L589.6 352.3 L533.3 412.4 L549 497 L471 462.5 L396.8 504.2 L407.2 417.8 L344.6 362.7 L429.3 346 Z" fill="#28220e"/><path d="M572.00 503.50 L590.65 446.66 L605.30 446.66 L594.20 480.41 L601.75 480.41 L606.63 492.40 L589.31 493.29 L585.76 503.50 Z M607.08 446.66 L626.61 503.50 L612.40 503.50 L600.42 466.64 Z" fill="#28220e"/><path d="M627.99 446.66 L670.62 446.66 L667.29 459.32 L646.64 490.62 L671.29 490.62 L670.62 502.61 L624.00 502.61 L651.97 459.32 L627.99 459.32 Z" fill="#28220e"/><path d="M672.62 446.66 L715.24 446.66 L711.91 459.32 L691.27 490.62 L715.91 490.62 L715.24 502.61 L668.62 502.61 L696.60 459.32 L672.62 459.32 Z" fill="#28220e"/><path d="M713.2 475 A25 29 0 1 0 763.2 475 A25 29 0 1 0 713.2 475 Z M726.6 476 A11.3 16 0 1 0 749.2 476 A11.3 16 0 1 0 726.6 476 Z" fill="#28220e" fill-rule="evenodd"/><path d="M737.2 446 L737.2 460 M713 476 L726.6 476" stroke="#888" stroke-width="0.8"/><g fill="none" stroke="#e8f0f0" stroke-width="2.6" opacity="0.55"><path d="M469.5 517.1 L510.3 592.7 L596.3 601.4 L537.4 664.9 L554.5 748.3 L476.9 711.6 L402.2 753.8 L413.5 669 L349.6 611.4 L433.5 596 Z"/><path d="M577.0 753.5 L595.6 696.0 L612.0 696.0 L632.9 753.5 L618.2 753.5 L615.1 741.8 L594.9 741.8 L591.8 753.5 ZM599.5 730.2 L612.7 730.2 L607.3 710.0 ZM609.6 696.8 L598.8 730.2 Z"/><path d="M635.3 683.5 L708.3 683.5 L703.7 696.8 L636.1 696.8 Z"/><path d="M652.4 685.1 L664.8 685.1 L651.6 728.6 L633.7 728.6 ZM678.8 685.1 L699.8 685.1 L681.9 728.6 L664.0 728.6 ZM669.5 685.1 L677.2 685.1 L672.6 696.8 L666.4 696.8 Z"/><path d="M653.2 740.3 L671.8 740.3 L671.8 765.1 L646.9 765.1 Z"/><path d="M685.0 740.3 L700.6 740.3 L700.6 771.4 L676.5 771.4 ZM685.8 755.8 L700.6 755.8 Z"/><path d="M686.6 741.8 C688.1 726.3 697.4 714.6 708.3 713.9 L708.3 726.3"/><ellipse cx="710.7" cy="755.0" rx="24.9" ry="29.5"/><ellipse cx="711.0" cy="749.1" rx="12.1" ry="23.0"/></g><g fill="none" stroke="#ff2e2e" stroke-width="1.15" stroke-linejoin="miter"><path d="M469.5 517.1 L510.3 592.7 L596.3 601.4 L537.4 664.9 L554.5 748.3 L476.9 711.6 L402.2 753.8 L413.5 669 L349.6 611.4 L433.5 596 Z"/><path d="M577.0 753.5 L595.6 696.0 L612.0 696.0 L632.9 753.5 L618.2 753.5 L615.1 741.8 L594.9 741.8 L591.8 753.5 ZM599.5 730.2 L612.7 730.2 L607.3 710.0 ZM609.6 696.8 L598.8 730.2 Z"/><path d="M635.3 683.5 L708.3 683.5 L703.7 696.8 L636.1 696.8 Z"/><path d="M652.4 685.1 L664.8 685.1 L651.6 728.6 L633.7 728.6 ZM678.8 685.1 L699.8 685.1 L681.9 728.6 L664.0 728.6 ZM669.5 685.1 L677.2 685.1 L672.6 696.8 L666.4 696.8 Z"/><path d="M653.2 740.3 L671.8 740.3 L671.8 765.1 L646.9 765.1 Z"/><path d="M685.0 740.3 L700.6 740.3 L700.6 771.4 L676.5 771.4 ZM685.8 755.8 L700.6 755.8 Z"/><path d="M686.6 741.8 C688.1 726.3 697.4 714.6 708.3 713.9 L708.3 726.3"/><ellipse cx="710.7" cy="755.0" rx="24.9" ry="29.5"/><ellipse cx="711.0" cy="749.1" rx="12.1" ry="23.0"/></g></g></svg>
<svg style="left:0px;top:0px;" width="1126" height="1044" viewBox="0 0 1126 1044"><path d="M341.5 238.5 L791.5 238.5 L791.5 1040 M341.5 238.5 L341.5 1040" fill="none" stroke="#000" stroke-width="1"/><path d="M341.5 238.5 L791.5 238.5 L791.5 1040 M341.5 238.5 L341.5 1040" fill="none" stroke="#f4f020" stroke-width="1" stroke-dasharray="4 4"/></svg>
<div class="a" style="left:831px;top:125px;width:10.5px;height:863px;background:#8e8e8e;border:1.5px solid #151515;border-radius:6px"></div>
<div class="a" style="left:780px;top:991px;width:47px;height:11px;background:#8e8e8e;border:1.5px solid #151515;border-radius:6px"></div>
<svg style="left:827px;top:985px;" width="18" height="18" viewBox="0 0 18 18"><path d="M9 1 L16 15 L9 11.5 L2 15 Z" fill="#e0e0e0"/></svg>
<div class="a" style="left:819px;top:1015px;width:16px;height:16px;background:transparent;border:1px solid #555;border-radius:2px"></div>
<div class="a" style="left:305px;top:796px;width:499px;height:243px;background:#3a3a3a;border-top-left-radius:8px;border-top-right-radius:8px;box-shadow:0 0 0 1px #2c2c2c"></div>
<div class="a" style="left:305px;top:841px;width:499px;height:1px;background:#282828;"></div>
<div class="a" style="left:311px;top:802px;width:67px;height:34px;background:#2e2e2e;border:1px solid #8c8c8c;border-radius:5px"></div>
<div class="t" style="left:328px;top:813px;font-size:14px;color:#e0e0e0;font-weight:400;letter-spacing:0.118px;">Aiuto</div>
<div class="a" style="left:384px;top:802px;width:368px;height:34px;background:#2a2a2a;border-radius:5px;border:1px solid #222"></div>
<div class="a" style="left:385px;top:803px;width:121px;height:32px;background:#1f1f1f;border-top-left-radius:4px;border-bottom-left-radius:4px"></div>
<div class="a" style="left:505px;top:803px;width:1px;height:32px;background:#1c1c1c;"></div>
<div class="a" style="left:630px;top:803px;width:1px;height:32px;background:#1c1c1c;"></div>
<div class="t" style="left:405px;top:813px;font-size:14px;color:#e0e0e0;font-weight:400;letter-spacing:0.245px;">Informazioni</div>
<div class="t" style="left:522.6px;top:813px;font-size:14px;color:#e0e0e0;font-weight:400;letter-spacing:-0.230px;">Riconoscimenti</div>
<div class="t" style="left:668.5px;top:813px;font-size:14px;color:#e0e0e0;font-weight:400;letter-spacing:-0.565px;">Licenza</div>
<svg style="left:775px;top:813px;" width="12" height="12" viewBox="0 0 12 12"><path d="M2 2 L10 10 M10 2 L2 10" stroke="#b0b0b0" stroke-width="2"/></svg>
<svg style="left:0px;top:0px;" width="1126" height="1044" viewBox="0 0 1126 1044">
<defs><filter id="wsh" x="-20%" y="-20%" width="140%" height="140%"><feDropShadow dx="1" dy="1.5" stdDeviation="1.5" flood-color="#000" flood-opacity="0.45"/></filter></defs>
<g filter="url(#wsh)">
<path d="M521.3 879.3 C519 895 517 912 515.3 924.6 L503.3 929.9 C510 942 525 952 557.3 956.6 C570 956 578 950 583.9 945.9 C592 940 597 934 599.9 929.9 C606 921 610 914 611.2 906 C613 890 612 875 608.5 864 C598 876 588 884 573.2 888.6 C566 891 560 894 554.6 894 C546 894 540 891 533.3 888.6 C528 886 524 883 521.3 879.3 Z" fill="#887d70"/>
<ellipse cx="501.3" cy="912" rx="11.8" ry="15" fill="#000"/>
</g>
<circle cx="500.6" cy="904.6" r="6.3" fill="#fff"/>
<circle cx="534.6" cy="911.3" r="13.3" fill="#fff"/>
<ellipse cx="537.3" cy="912" rx="8.3" ry="10" fill="#000"/>
<circle cx="537.3" cy="906" r="3.8" fill="#fff"/>
<circle cx="565.3" cy="911.3" r="17.3" fill="#fff"/>
<ellipse cx="568.6" cy="912" rx="11" ry="12" fill="#000"/>
<circle cx="568.6" cy="904.6" r="4.8" fill="#fff"/>
<path d="M542.6 948.6 C552 950 570 949 585.2 935.3" fill="none" stroke="#000" stroke-width="2.4" stroke-linecap="round"/>
<path d="M582 934 L587.5 933.8 L586 937 Z" fill="#000"/>
<path d="M577 944 L591.5 951.5" stroke="#f08830" stroke-width="5.4" stroke-linecap="round"/>
<path d="M591.5 951.5 L596.5 954.5" stroke="#b8b8b8" stroke-width="4.6"/>
<path d="M596 950 C602 950 607 953 608.5 957 C612 961 612.5 966 611.2 969.5 C608 967 603 965 599.5 962 C596.5 960 594.5 957 594 954 Z" fill="#000"/>
<path d="M597 952 L600 950.5 L600.5 954 M602 951.5 L605 952.5 L603 955" fill="none" stroke="#9a9080" stroke-width="1"/>
</svg>
<div class="t" style="left:536.5px;top:998px;font-size:13px;color:#dcdcdc;font-weight:700;letter-spacing:0.519px;">GIMP</div>
<div class="t" style="left:538.4px;top:1029px;font-size:13px;color:#c8c8c8;font-weight:400;letter-spacing:0.417px;">3.0.4</div>
<div class="a" style="left:545px;top:1039px;width:73px;height:5px;background:#f2d660;"></div>
<div class="a" style="left:852px;top:55px;width:274px;height:984px;background:#3b3b3b;"></div>
<div class="a" style="left:852px;top:55px;width:1px;height:984px;background:#2a2a2a;"></div>
<div class="a" style="left:852px;top:88px;width:274px;height:1px;background:#2a2a2a;"></div>
<div class="a" style="left:858px;top:55px;width:34px;height:33px;background:#3b3b3b;border:1px solid #2c2c2c;border-bottom:none;border-top:none"></div>
<div class="a" style="left:896px;top:55px;width:34px;height:33px;background:#3b3b3b;border:1px solid #2c2c2c;border-bottom:none;border-top:none"></div>
<div class="a" style="left:934px;top:55px;width:34px;height:33px;background:#3b3b3b;border:1px solid #2c2c2c;border-bottom:none;border-top:none"></div>
<div class="a" style="left:972px;top:55px;width:34px;height:33px;background:#3b3b3b;border:1px solid #2c2c2c;border-bottom:none;border-top:none"></div>
<div class="a" style="left:1010px;top:55px;width:34px;height:33px;background:#3b3b3b;border:1px solid #2c2c2c;border-bottom:none;border-top:none"></div>
<div class="a" style="left:1048px;top:55px;width:33px;height:29px;background:#1f1f1f;"></div>
<div class="a" style="left:1049px;top:84px;width:31px;height:4px;background:#555;"></div>
<svg style="left:0px;top:0px;" width="1126" height="1044" viewBox="0 0 1126 1044">
<path d="M885 62 L876.5 74 L874.5 72.5 Z" fill="#dcdcdc"/><path d="M874 73 C871 74 872 78.5 868.5 80 C873.5 80.5 877.5 78 876.5 75 Z" fill="#dcdcdc"/>
<defs><mask id="selm"><rect x="900" y="60" width="26" height="26" fill="#fff"/><circle cx="913" cy="72" r="7" fill="#000"/><rect x="907.8" y="62" width="1.6" height="22" fill="#000"/><rect x="916.6" y="62" width="1.6" height="22" fill="#000"/><rect x="903" y="67" width="20" height="1.6" fill="#000"/><rect x="903" y="75.8" width="20" height="1.6" fill="#000"/></mask></defs>
<rect x="905" y="64" width="16" height="16" fill="#dcdcdc" mask="url(#selm)"/>
<circle cx="913" cy="72" r="2.2" fill="#dcdcdc"/>
<text x="944.5" y="71" font-size="8.5" font-weight="bold" font-family="Liberation Sans" fill="#dcdcdc">a</text>
<text x="952.5" y="74.5" font-size="11" font-weight="bold" font-family="Liberation Sans" fill="#dcdcdc">b</text>
<text x="945.5" y="79.5" font-size="9.5" font-style="italic" font-family="Liberation Serif" fill="#dcdcdc">c</text>
<path d="M981.9 63.9 L992.7 63.9 L995.9 67.8 L984.9 67.8 Z M981.9 72 L992.7 72 L995.9 76 L984.9 76 Z" fill="#dcdcdc"/>
<path d="M984.9 67.8 L995.9 67.8 L992.7 71.7 L981.9 71.7 Z M984.9 76 L995.9 76 L992.7 79.9 L981.9 79.9 Z" fill="#8f8f8f"/>
<path d="M1026 62 L1034 80 L1026 76 L1018 80 Z" fill="#dcdcdc"/>
<defs><linearGradient id="bg1" x1="0" x2="1"><stop offset="0" stop-color="#1a6cff"/><stop offset="0.5" stop-color="#29b8f5"/><stop offset="1" stop-color="#1de0c0"/></linearGradient></defs>
<rect x="1055" y="62" width="19" height="19" fill="url(#bg1)" stroke="#000" stroke-width="1.2"/>
<rect x="1107.5" y="66.5" width="11" height="11" fill="none" stroke="#dcdcdc" stroke-width="1.2"/><path d="M1116 69 L1116 75 L1111 72 Z" fill="#dcdcdc"/>
</svg>
<div class="a" style="left:855px;top:91px;width:268px;height:25px;background:#262626;border-radius:6px"></div>
<div class="t" style="left:863px;top:98px;font-size:13.5px;color:#a8a8a8;font-weight:400;letter-spacing:0.299px;font-style:italic;">filtro</div>
<svg style="left:1098px;top:98px;" width="16" height="10" viewBox="0 0 16 10"><path d="M1.5 1.5 L8 8 L14.5 1.5" fill="none" stroke="#e0e0e0" stroke-width="2"/></svg>
<div class="a" style="left:855px;top:118px;width:268px;height:230px;background:#232323;border:1px solid #2c2c2c"></div>
<div class="a" style="left:856px;top:119px;width:266px;height:25px;background:#383838;"></div>
<div class="a" style="left:857px;top:122px;width:34px;height:19px;background:#000;background:linear-gradient(90deg,#1a70f0,#2ab0f8 30%,#38dcf8 60%,#20f0b0);border:1px solid #000"></div>
<div class="t" style="left:893.3px;top:126px;font-size:13.7px;color:#dcdcdc;font-weight:400;letter-spacing:0.010px;">Blue Green</div>
<div class="a" style="left:857px;top:147px;width:34px;height:19px;background:#000;background:linear-gradient(90deg,#b87030,#8a5020 18%,#d08038 32%,#b86040 45%,#d09870 58%,#a87050 70%,#d8a880 85%,#a87048);border:1px solid #000"></div>
<div class="t" style="left:893.3px;top:151px;font-size:13.7px;color:#dcdcdc;font-weight:400;letter-spacing:0.003px;">Browns</div>
<div class="a" style="left:857px;top:172px;width:34px;height:19px;background:#000;background:linear-gradient(90deg,#8a8a80,#c8c8c0 25%,#e8e8e0 45%,#a8a8a0 60%,#d0d0d0 70%,#707070);border:1px solid #000"></div>
<div class="t" style="left:893.3px;top:176px;font-size:13.7px;color:#dcdcdc;font-weight:400;letter-spacing:0.234px;">Brushed Aluminium</div>
<div class="a" style="left:857px;top:197px;width:34px;height:19px;background:#000;background:linear-gradient(90deg,#ffffff 0,#ffffff 60%,#202020 62%,#ff3000 70%,#ffe030 82%,#ff5000 90%,#902000 100%);border:1px solid #000"></div>
<div class="t" style="left:893.3px;top:201px;font-size:13.7px;color:#dcdcdc;font-weight:400;letter-spacing:0.063px;">Burning Paper</div>
<div class="a" style="left:857px;top:222px;width:34px;height:19px;background:#888;background-image:linear-gradient(90deg,transparent 60%,#301000 62%,#ff4000 72%,#ffe040 82%,#ff6000 90%,#804020 95%,transparent 100%),repeating-conic-gradient(#666 0 25%,#999 0 50%);background-size:100% 100%,8px 8px;border:1px solid #000"></div>
<div class="t" style="left:893.3px;top:226px;font-size:13.7px;color:#dcdcdc;font-weight:400;letter-spacing:0.008px;">Burning Transparency</div>
<div class="a" style="left:857px;top:247px;width:34px;height:19px;background:#000;background:linear-gradient(90deg,#0a2aa0,#1060c0 35%,#40c8c0 60%,#f0fff0 70%,#50b040 80%,#208020);border:1px solid #000"></div>
<div class="t" style="left:893.3px;top:251px;font-size:13.7px;color:#dcdcdc;font-weight:400;letter-spacing:-0.093px;">Caribbean Blues</div>
<div class="a" style="left:857px;top:272px;width:34px;height:19px;background:#000;background:linear-gradient(90deg,#d0d0d0,#f8f8f8 20%,#ffff50 28%,#20e8ff 32%,#f0f0f0 40%,#c8c8c8 60%,#ffff50 74%,#20e8ff 78%,#e8e8e8 86%,#c0c0c0);border:1px solid #000"></div>
<div class="t" style="left:893.3px;top:276px;font-size:13.7px;color:#dcdcdc;font-weight:400;letter-spacing:-1.494px;">CD</div>
<div class="a" style="left:857px;top:297px;width:34px;height:19px;background:#000;background:linear-gradient(90deg,#c8c8c8,#f8f8f8 30%,#ffff40 52%,#20e8ff 58%,#f0f0f0 68%,#c8c8c8);border:1px solid #000"></div>
<div class="t" style="left:893.3px;top:301px;font-size:13.7px;color:#dcdcdc;font-weight:400;letter-spacing:-0.380px;">CD Half</div>
<div class="a" style="left:857px;top:322px;width:34px;height:19px;background:#888;background-image:repeating-conic-gradient(#6a665e 0 25%,#8e8a82 0 50%);background-size:8px 8px;border:1px solid #000"></div>
<div class="t" style="left:893.3px;top:326px;font-size:13.7px;color:#dcdcdc;font-weight:400;letter-spacing:-0.036px;">Coffee</div>
<div class="a" style="left:855px;top:351px;width:268px;height:24px;background:#262626;border-radius:6px"></div>
<div class="t" style="left:863px;top:357px;font-size:13.5px;color:#a0a0a0;font-weight:400;letter-spacing:-0.204px;font-style:italic;">inserimento marcatori</div>
<svg style="left:1098px;top:357px;" width="16" height="10" viewBox="0 0 16 10"><path d="M1.5 1.5 L8 8 L14.5 1.5" fill="none" stroke="#e0e0e0" stroke-width="2"/></svg>
<svg style="left:0px;top:0px;" width="1126" height="1044" viewBox="0 0 1126 1044">
<!-- edit -->
<path d="M872 383.5 L881 383.5 M872 388 L879 388 M872 392.5 L877 392.5 M872 397 L887 397" stroke="#dcdcdc" stroke-width="1.6"/>
<path d="M887.5 382 L889.5 384 L881.5 392 L878.5 393 L879.5 390 Z" fill="#dcdcdc"/>
<!-- new -->
<path d="M929 385.5 L936.5 385.5 L940 389 L940 398 L929 398 Z" fill="none" stroke="#dcdcdc" stroke-width="1.6"/>
<path d="M928.5 379.5 L928.5 387 M924.5 383 L932 383" stroke="#dcdcdc" stroke-width="1.8"/>
<!-- duplicate -->
<rect x="983.5" y="383.5" width="10" height="8" fill="none" stroke="#dcdcdc" stroke-width="1.5"/>
<rect x="987.5" y="388.5" width="10" height="8" fill="#3b3b3b" stroke="#dcdcdc" stroke-width="1.5"/>
<!-- delete disabled -->
<rect x="1036" y="382" width="16" height="16" rx="1.5" fill="#6a6a6a"/><path d="M1039.5 385.5 L1048.5 394.5 M1048.5 385.5 L1039.5 394.5" stroke="#3b3b3b" stroke-width="2.2"/>
<!-- refresh -->
<path d="M1103.5 386 A6 6 0 1 0 1104 394" fill="none" stroke="#dcdcdc" stroke-width="2.2"/><path d="M1100 384 L1106 381.5 L1106 388 Z" fill="#dcdcdc"/>
<!-- dots -->
<circle cx="983" cy="408.5" r="1.3" fill="#aaa"/><circle cx="988" cy="408.5" r="1.3" fill="#aaa"/><circle cx="993" cy="408.5" r="1.3" fill="#aaa"/>
</svg>
<div class="a" style="left:852px;top:404px;width:274px;height:1px;background:#2a2a2a;"></div>
<div class="a" style="left:852px;top:445px;width:274px;height:1px;background:#2a2a2a;"></div>
<div class="a" style="left:858px;top:413px;width:34px;height:32px;background:#3b3b3b;border:1px solid #2c2c2c;border-bottom:none"></div>
<div class="a" style="left:896px;top:413px;width:34px;height:32px;background:#3b3b3b;border:1px solid #2c2c2c;border-bottom:none"></div>
<div class="a" style="left:934px;top:413px;width:33px;height:28px;background:#1f1f1f;"></div>
<div class="a" style="left:935px;top:441px;width:31px;height:4px;background:#555;"></div>
<svg style="left:0px;top:0px;" width="1126" height="1044" viewBox="0 0 1126 1044">
<path d="M868 419.5 L883 419.5 L880.5 424 L866 424 Z M868 426 L883 426 L880.5 430.5 L866 430.5 Z M868 432.5 L883 432.5 L880.5 437 L866 437 Z" fill="#dcdcdc"/>
<rect x="904.5" y="420.5" width="16" height="15.5" fill="none" stroke="#dcdcdc" stroke-width="1.5"/>
<path d="M909 423 L909 434 M912.5 423 L912.5 434 M916 423 L916 434" stroke="#dcdcdc" stroke-width="1.6"/>
<path d="M943 434.5 C945 425 957 425 959 434.5" fill="none" stroke="#dcdcdc" stroke-width="2"/>
<path d="M941.5 424.5 L960.5 424.5" stroke="#dcdcdc" stroke-width="1.3"/>
<rect x="940" y="423" width="3" height="3" fill="#dcdcdc"/><rect x="958.5" y="423" width="3" height="3" fill="#dcdcdc"/><rect x="949.5" y="423" width="3" height="3" fill="#dcdcdc"/>
<rect x="1107.5" y="422.5" width="11" height="11" fill="none" stroke="#dcdcdc" stroke-width="1.2"/><path d="M1116 425 L1116 431 L1111 428 Z" fill="#dcdcdc"/>
</svg>
<div class="a" style="left:855px;top:449px;width:268px;height:227px;background:#242424;border:1px solid #2c2c2c"></div>
<div class="a" style="left:856px;top:450px;width:266px;height:36px;background:#3a3a3a;border-bottom:1px solid #2c2c2c"></div>
<div class="a" style="left:884px;top:450px;width:1px;height:36px;background:#2c2c2c;"></div>
<div class="a" style="left:914px;top:450px;width:1px;height:36px;background:#2c2c2c;"></div>
<div class="t" style="left:964px;top:461px;font-size:14.2px;color:#dcdcdc;font-weight:700;letter-spacing:0.018px;">3 elementi selezionati</div>
<div class="a" style="left:856px;top:486px;width:266px;height:36px;background:#3a3a3a;"></div>
<div class="a" style="left:917px;top:488px;width:25px;height:33px;background:#fff;border:1px solid #000"></div>
<div class="t" style="left:944px;top:498px;font-size:13.7px;color:#dcdcdc;font-weight:400;letter-spacing:0.000px;">rect1</div>
<div class="a" style="left:856px;top:522px;width:266px;height:36px;background:#3a3a3a;"></div>
<div class="a" style="left:917px;top:524px;width:25px;height:33px;background:#fff;border:1px solid #000"></div>
<div class="t" style="left:944px;top:534px;font-size:13.7px;color:#dcdcdc;font-weight:400;letter-spacing:0.000px;">path1</div>
<div class="a" style="left:856px;top:558px;width:266px;height:36px;background:#3a3a3a;"></div>
<div class="a" style="left:917px;top:560px;width:25px;height:33px;background:#fff;border:1px solid #000"></div>
<div class="t" style="left:944px;top:570px;font-size:13.7px;color:#dcdcdc;font-weight:400;letter-spacing:0.000px;">text1</div>
<svg style="left:0px;top:0px;" width="1126" height="1044" viewBox="0 0 1126 1044"><path d="M861.5 468 C865.5 462 873.5 462 877.5 468 C873.5 474 865.5 474 861.5 468 Z" fill="none" stroke="#dcdcdc" stroke-width="1.5"/><circle cx="869.5" cy="468" r="2.6" fill="#dcdcdc"/><path d="M861.5 505 C865.5 499 873.5 499 877.5 505 C873.5 511 865.5 511 861.5 505 Z" fill="none" stroke="#dcdcdc" stroke-width="1.5"/><circle cx="869.5" cy="505" r="2.6" fill="#dcdcdc"/><path d="M861.5 541 C865.5 535 873.5 535 877.5 541 C873.5 547 865.5 547 861.5 541 Z" fill="none" stroke="#dcdcdc" stroke-width="1.5"/><circle cx="869.5" cy="541" r="2.6" fill="#dcdcdc"/><path d="M861.5 577 C865.5 571 873.5 571 877.5 577 C873.5 583 865.5 583 861.5 577 Z" fill="none" stroke="#dcdcdc" stroke-width="1.5"/><circle cx="869.5" cy="577" r="2.6" fill="#dcdcdc"/><path d="M896.5 466 L896.5 463 A3.5 3.5 0 0 1 903.5 463 L903.5 466" fill="none" stroke="#dcdcdc" stroke-width="1.6"/><rect x="894" y="465.5" width="12" height="8" fill="#dcdcdc"/><path d="M924 538 L925.8 542.4 L930.5 542.6 L926.9 545.6 L928.1 550.2 L924 547.6 L919.9 550.2 L921.1 545.6 L917.5 542.6 L922.2 542.4 Z" fill="none" stroke="#333" stroke-width="0.8"/><path d="M930 583 L934 581 L937 584 L934 586 Z" fill="#222"/><text x="929" y="586" font-size="4" font-weight="bold" fill="#111" font-family="Liberation Sans">AZ</text></svg>
<svg style="left:0px;top:0px;" width="1126" height="1044" viewBox="0 0 1126 1044">
<path d="M866 686 L872.5 686 L876 689.5 L876 698 L866 698 Z" fill="none" stroke="#dcdcdc" stroke-width="1.5"/>
<path d="M865.5 681 L865.5 688 M862 684.5 L869 684.5" stroke="#dcdcdc" stroke-width="1.7"/>
<path d="M897 695 L904 688 L911 695" fill="none" stroke="#6a6a6a" stroke-width="1.8"/>
<path d="M931 688 L938 695 L945 688" fill="none" stroke="#6a6a6a" stroke-width="1.8"/>
<rect x="964.5" y="685.5" width="9" height="7.5" fill="none" stroke="#dcdcdc" stroke-width="1.4"/>
<rect x="968.5" y="690" width="9" height="7.5" fill="#3b3b3b" stroke="#dcdcdc" stroke-width="1.4"/>
<rect x="998" y="684" width="15" height="15" fill="none" stroke="#dcdcdc" stroke-width="1" stroke-dasharray="1 1"/>
<circle cx="1005.5" cy="691.5" r="5" fill="#8a8a8a"/><path d="M1000.5 691.5 A5 5 0 0 1 1010.5 691.5 Z" fill="#bbb"/>
<path d="M1033 697 L1046 684" stroke="#6a6a6a" stroke-width="1.2"/><rect x="1036" y="687" width="7" height="7" fill="#5a5a5a" transform="rotate(45 1039.5 690.5)"/>
<rect x="1031.5" y="695" width="3" height="3" fill="#6a6a6a"/><rect x="1044.5" y="682" width="3" height="3" fill="#6a6a6a"/>
<path d="M1067 698 C1070 692 1074 690 1080 684" fill="none" stroke="#dcdcdc" stroke-width="1.2" stroke-dasharray="1.5 1.5"/>
<circle cx="1068" cy="697" r="1.6" fill="#dcdcdc"/><circle cx="1074" cy="690" r="2" fill="#dcdcdc"/><circle cx="1080" cy="684" r="1.6" fill="#dcdcdc"/>
<rect x="1100" y="683" width="16" height="16" rx="1.5" fill="#dcdcdc"/><path d="M1103.5 686.5 L1112.5 695.5 M1112.5 686.5 L1103.5 695.5" stroke="#3b3b3b" stroke-width="2.4"/>
<circle cx="983" cy="710.5" r="1.3" fill="#aaa"/><circle cx="988" cy="710.5" r="1.3" fill="#aaa"/><circle cx="993" cy="710.5" r="1.3" fill="#aaa"/>
</svg>
<div class="a" style="left:852px;top:706px;width:274px;height:1px;background:#2a2a2a;"></div>
<div class="a" style="left:852px;top:746px;width:274px;height:1px;background:#2a2a2a;"></div>
<div class="a" style="left:858px;top:713px;width:33px;height:29px;background:#1f1f1f;"></div>
<div class="a" style="left:859px;top:742px;width:31px;height:4px;background:#555;"></div>
<svg style="left:0px;top:0px;" width="1126" height="1044" viewBox="0 0 1126 1044">
<path d="M866.5 737 L868.5 730 L870.5 722 L872.5 731 L874.5 728 L876.5 733 L879 730 L882 737 Z" fill="#dcdcdc"/>
<rect x="1107.5" y="723.5" width="11" height="11" fill="none" stroke="#dcdcdc" stroke-width="1.2"/><path d="M1116 726 L1116 732 L1111 729 Z" fill="#dcdcdc"/>
</svg>
<div class="t" style="left:854.4px;top:754px;font-size:13.5px;color:#d0d0d0;font-weight:400;letter-spacing:-0.224px;font-style:italic;">stellaaa.svg</div>
<div class="a" style="left:854px;top:770px;width:111px;height:25px;background:#2b2b2b;border:1px solid #232323;border-radius:6px"></div>
<div class="a" style="left:1000px;top:770px;width:30px;height:25px;background:#1f1f1f;border-radius:5px"></div>
<div class="a" style="left:1064px;top:770px;width:30px;height:25px;background:#1f1f1f;border-radius:5px"></div>
<svg style="left:0px;top:0px;" width="1126" height="1044" viewBox="0 0 1126 1044">
<rect x="859.5" y="777" width="14.5" height="13" fill="none" stroke="#dcdcdc" stroke-width="1.4"/><path d="M866.75 780 L866.75 787" stroke="#dcdcdc" stroke-width="1.8"/>
<path d="M948.5 781.5 L954.5 787.5 L960.5 781.5" fill="none" stroke="#dcdcdc" stroke-width="1.8"/>
<rect x="978.5" y="777" width="13" height="13" fill="none" stroke="#dcdcdc" stroke-width="1.3"/><path d="M979 789.5 L991 777.5" stroke="#dcdcdc" stroke-width="1"/>
<rect x="1008.5" y="777" width="13" height="13" fill="none" stroke="#dcdcdc" stroke-width="1.3"/><path d="M1009 789.5 L1021 777.5 C1018 778 1012 782 1009 789.5 Z" fill="#dcdcdc"/><path d="M1009 789.5 Q1011 780 1021 777.5 Q1019 786 1009 789.5 Z" fill="#dcdcdc"/>
<rect x="1038.5" y="777" width="13" height="13" fill="none" stroke="#dcdcdc" stroke-width="1.3"/><path d="M1039 789.5 Q1041 780 1051 777.5 L1039 789.5 Z" fill="#dcdcdc"/>
<rect x="1072" y="776.5" width="14" height="10" fill="none" stroke="#dcdcdc" stroke-width="1.3"/><path d="M1073 786 L1075 781 L1077 783 L1079 778.5 L1081 782 L1083 780 L1085 786 Z" fill="#dcdcdc"/><path d="M1071 789 L1087 789 M1073 789 L1073 792 M1085 789 L1085 792 M1079 789 L1079 791" stroke="#dcdcdc" stroke-width="1.1"/>
<rect x="1102" y="776.5" width="14" height="10" fill="none" stroke="#dcdcdc" stroke-width="1.3"/><path d="M1103 786 C1105 780 1108 779 1111 780 C1113 781 1114 780 1115 779 L1115 786 Z" fill="#dcdcdc"/><path d="M1101 789 L1117 789 M1103 789 L1103 792 M1115 789 L1115 792 M1109 789 L1109 791" stroke="#dcdcdc" stroke-width="1.1"/>
</svg>
<div class="t" style="left:879px;top:778px;font-size:14px;color:#dcdcdc;font-weight:400;letter-spacing:-0.288px;">Valore</div>
<div class="a" style="left:855px;top:799px;width:268px;height:134px;background:#262626;border:1px solid #9a9a9a"></div>
<div class="a" style="left:897px;top:800px;width:1px;height:132px;background:#f0f0f0;"></div>
<div class="a" style="left:908px;top:800px;width:1px;height:132px;background:#a0a0a0;"></div>
<div class="a" style="left:962px;top:800px;width:1px;height:132px;background:#a0a0a0;"></div>
<div class="a" style="left:1015px;top:800px;width:1px;height:132px;background:#a0a0a0;"></div>
<div class="a" style="left:1069px;top:800px;width:1px;height:132px;background:#a0a0a0;"></div>
<div class="a" style="left:856px;top:929px;width:3px;height:2px;background:#fff;"></div>
<div class="a" style="left:855px;top:934px;width:268px;height:12px;background:#000;background:linear-gradient(90deg,#000,#fff)"></div>
<svg style="left:0px;top:0px;" width="1126" height="1044" viewBox="0 0 1126 1044"><path d="M855.5 947 L855.5 955.5 L860.5 955.5 Z" fill="#000" stroke="#fff" stroke-width="1"/><path d="M1122 947 L1122 955.5 L1117 955.5 Z" fill="#fff"/></svg>
<div class="a" style="left:854px;top:959px;width:90px;height:29px;background:#363636;border:1px solid #2e2e2e;border-radius:6px"></div>
<div class="a" style="left:855px;top:960px;width:46px;height:27px;background:#232323;border-top-left-radius:5px;border-bottom-left-radius:5px"></div>
<div class="a" style="left:922px;top:962px;width:1px;height:23px;background:#2a2a2a;"></div>
<div class="a" style="left:1034px;top:959px;width:90px;height:29px;background:#363636;border:1px solid #2e2e2e;border-radius:6px"></div>
<div class="a" style="left:1035px;top:960px;width:46px;height:27px;background:#232323;border-top-left-radius:5px;border-bottom-left-radius:5px"></div>
<div class="a" style="left:1102px;top:962px;width:1px;height:23px;background:#2a2a2a;"></div>
<div class="a" style="left:901px;top:962px;width:1px;height:23px;background:#2a2a2a;"></div>
<div class="a" style="left:1081px;top:962px;width:1px;height:23px;background:#2a2a2a;"></div>
<svg style="left:0px;top:0px;" width="1126" height="1044" viewBox="0 0 1126 1044">
<path d="M906.5 973.5 L918.5 973.5" stroke="#666" stroke-width="2.2"/>
<path d="M927 973.5 L939 973.5 M933 967.5 L933 979.5" stroke="#dcdcdc" stroke-width="2.4"/>
<path d="M1086 973.5 L1098 973.5" stroke="#dcdcdc" stroke-width="2.4"/>
<path d="M1107 973.5 L1119 973.5 M1113 967.5 L1113 979.5" stroke="#666" stroke-width="2.2"/>
</svg>
<div class="t" style="left:862.7px;top:969px;font-size:13.5px;color:#e0e0e0;font-weight:400;letter-spacing:-0.008px;">0</div>
<div class="t" style="left:1043.6px;top:969px;font-size:13.5px;color:#e0e0e0;font-weight:400;letter-spacing:0.025px;">255</div>
<div class="t" style="left:887.3px;top:993px;font-size:11.5px;color:#d8d8d8;font-weight:700;letter-spacing:-0.037px;">Media:</div>
<div class="t" style="left:926.5px;top:993px;font-size:11.5px;color:#d0d0d0;font-weight:400;letter-spacing:-0.456px;">0,153</div>
<div class="t" style="left:877.5px;top:1009px;font-size:11.5px;color:#d8d8d8;font-weight:700;letter-spacing:-0.190px;">Dev. std:</div>
<div class="t" style="left:926.5px;top:1009px;font-size:11.5px;color:#d0d0d0;font-weight:400;letter-spacing:-0.456px;">0,023</div>
<div class="t" style="left:876.5px;top:1025px;font-size:11.5px;color:#d8d8d8;font-weight:700;letter-spacing:0.141px;">Mediana</div>
<div class="t" style="left:926.5px;top:1025px;font-size:11.5px;color:#d0d0d0;font-weight:400;letter-spacing:-0.456px;">0,157</div>
<div class="t" style="left:1021.6px;top:993px;font-size:11.5px;color:#d8d8d8;font-weight:700;letter-spacing:-0.414px;">Pixel:</div>
<div class="t" style="left:1052.2px;top:993px;font-size:11.5px;color:#d0d0d0;font-weight:400;letter-spacing:-0.562px;">944101</div>
<div class="t" style="left:990.2px;top:1009px;font-size:11.5px;color:#d8d8d8;font-weight:700;letter-spacing:-0.108px;">Conteggio:</div>
<div class="t" style="left:1052.2px;top:1009px;font-size:11.5px;color:#d0d0d0;font-weight:400;letter-spacing:-0.562px;">944101</div>
<div class="t" style="left:990.2px;top:1025px;font-size:11.5px;color:#d8d8d8;font-weight:700;letter-spacing:0.072px;">Percentile:</div>
<div class="t" style="left:1052.2px;top:1025px;font-size:11.5px;color:#d0d0d0;font-weight:400;letter-spacing:-0.256px;">100,0</div>
<div class="a" style="left:0px;top:28px;width:8px;height:40px;background:#dcd5b3;"></div>
<div class="a" style="left:0px;top:68px;width:8px;height:6px;background:#ede9d9;"></div>
<div class="a" style="left:0px;top:74px;width:8px;height:34px;background:#d9d4c2;"></div>
<div class="a" style="left:0px;top:108px;width:8px;height:9px;background:#e6e2d0;"></div>
<div class="a" style="left:0px;top:117px;width:8px;height:14px;background:#e6e2d0;"></div>
<svg style="left:0px;top:116px;" width="9" height="16" viewBox="0 0 9 16"><path d="M-6 2 C-6 -1 8 -1 8 2 L8 10 C8 14 4 15 -6 14 Z" fill="#6364ff"/><path d="M-1 10 L-1 6 C-1 4 2 4 2 6 L2 9 M2 6 C2 4 5 4 5 6 L5 10" fill="none" stroke="#fff" stroke-width="1.3"/></svg>
<div class="a" style="left:0px;top:173px;width:8px;height:1px;background:#cfcbbd;"></div>
<div class="a" style="left:0px;top:249px;width:8px;height:1px;background:#cfcbbd;"></div>
<div class="a" style="left:0px;top:322px;width:8px;height:1px;background:#cfcbbd;"></div>
<div class="a" style="left:0px;top:398px;width:8px;height:1px;background:#cfcbbd;"></div>
<div class="a" style="left:0px;top:475px;width:8px;height:1px;background:#cfcbbd;"></div>
<div class="a" style="left:0px;top:575px;width:8px;height:1px;background:#cfcbbd;"></div>
<div class="a" style="left:0px;top:714px;width:8px;height:1px;background:#cfcbbd;"></div>
<div class="a" style="left:0px;top:756px;width:8px;height:1px;background:#cfcbbd;"></div>
<div class="a" style="left:0px;top:765px;width:8px;height:1px;background:#cfcbbd;"></div>
<div class="a" style="left:0px;top:800px;width:8px;height:1px;background:#cfcbbd;"></div>
<div class="a" style="left:0px;top:810px;width:8px;height:1px;background:#cfcbbd;"></div>
<div class="a" style="left:0px;top:845px;width:8px;height:1px;background:#cfcbbd;"></div>
<div class="a" style="left:0px;top:988px;width:8px;height:1px;background:#cfcbbd;"></div>
<div class="a" style="left:0px;top:643px;width:8px;height:10px;background:#d6d3c6;"></div>
<div class="a" style="left:0px;top:660px;width:8px;height:14px;background:#2a7fc0;"></div>
<div class="t" style="left:-4px;top:343px;font-size:15px;color:#3a3a3a;width:12px;overflow:hidden">8</div>
<div class="t" style="left:-4px;top:494px;font-size:15px;color:#3a3a3a;width:12px;overflow:hidden">e</div>
<div class="t" style="left:-4px;top:597px;font-size:15px;color:#3a3a3a;width:12px;overflow:hidden">e</div>
<div class="t" style="left:-4px;top:689px;font-size:15px;color:#3a3a3a;width:12px;overflow:hidden">n</div>
<div class="t" style="left:-4px;top:730px;font-size:15px;color:#3a3a3a;width:12px;overflow:hidden">G</div>
<div class="t" style="left:-4px;top:820px;font-size:15px;color:#3a3a3a;width:12px;overflow:hidden">&lt;/</div>
<div class="t" style="left:-4px;top:1000px;font-size:15px;color:#3a3a3a;width:12px;overflow:hidden">u</div>
<div class="a" style="left:8px;top:0px;width:1px;height:1039px;background:#9a9a9a;"></div>
<svg style="left:0px;top:0px;" width="60" height="30" viewBox="0 0 60 30"><circle cx="1.5" cy="2" r="4" fill="#3ca8a8"/>
<path d="M2 8 L12 4 L15 14 Z" fill="#000" stroke="#fff" stroke-width="1.2"/>
<path d="M17 7 C20 9 24 9 27 6 C28 9 29 14 26 18 C23 19 20 18 18 16 Z" fill="#8a6a48"/>
<circle cx="15.5" cy="13" r="2.3" fill="#2a3a3a"/><circle cx="19" cy="12.5" r="1.8" fill="#fff"/><circle cx="23" cy="12.5" r="1.8" fill="#fff"/>
<path d="M24 16 L31 21" stroke="#e08020" stroke-width="1.2"/><path d="M30 20 L33 22" stroke="#222" stroke-width="1.8"/>
<path d="M42 19 L46 15 M44 11 L50 17 M46 9 L52 15 L49 18 L43 12 Z" fill="#232629" stroke="#232629" stroke-width="1.2"/></svg>
<div class="a" style="left:291px;top:989px;width:14px;height:15px;background:#555;border:1px dotted #ccc"></div>
<svg style="left:0px;top:0px;" width="1126" height="1044" viewBox="0 0 1126 1044"><path d="M302 336 L308 341.5 L302 346.5 Z" fill="#e0e0e0"/><circle cx="286.5" cy="542.4" r="1.3" fill="#aaa"/><circle cx="286.5" cy="547.4" r="1.3" fill="#aaa"/><circle cx="286.5" cy="552.4" r="1.3" fill="#aaa"/><circle cx="848.5" cy="542.4" r="1.3" fill="#aaa"/><circle cx="848.5" cy="547.4" r="1.3" fill="#aaa"/><circle cx="848.5" cy="552.4" r="1.3" fill="#aaa"/></svg>
</body></html>
